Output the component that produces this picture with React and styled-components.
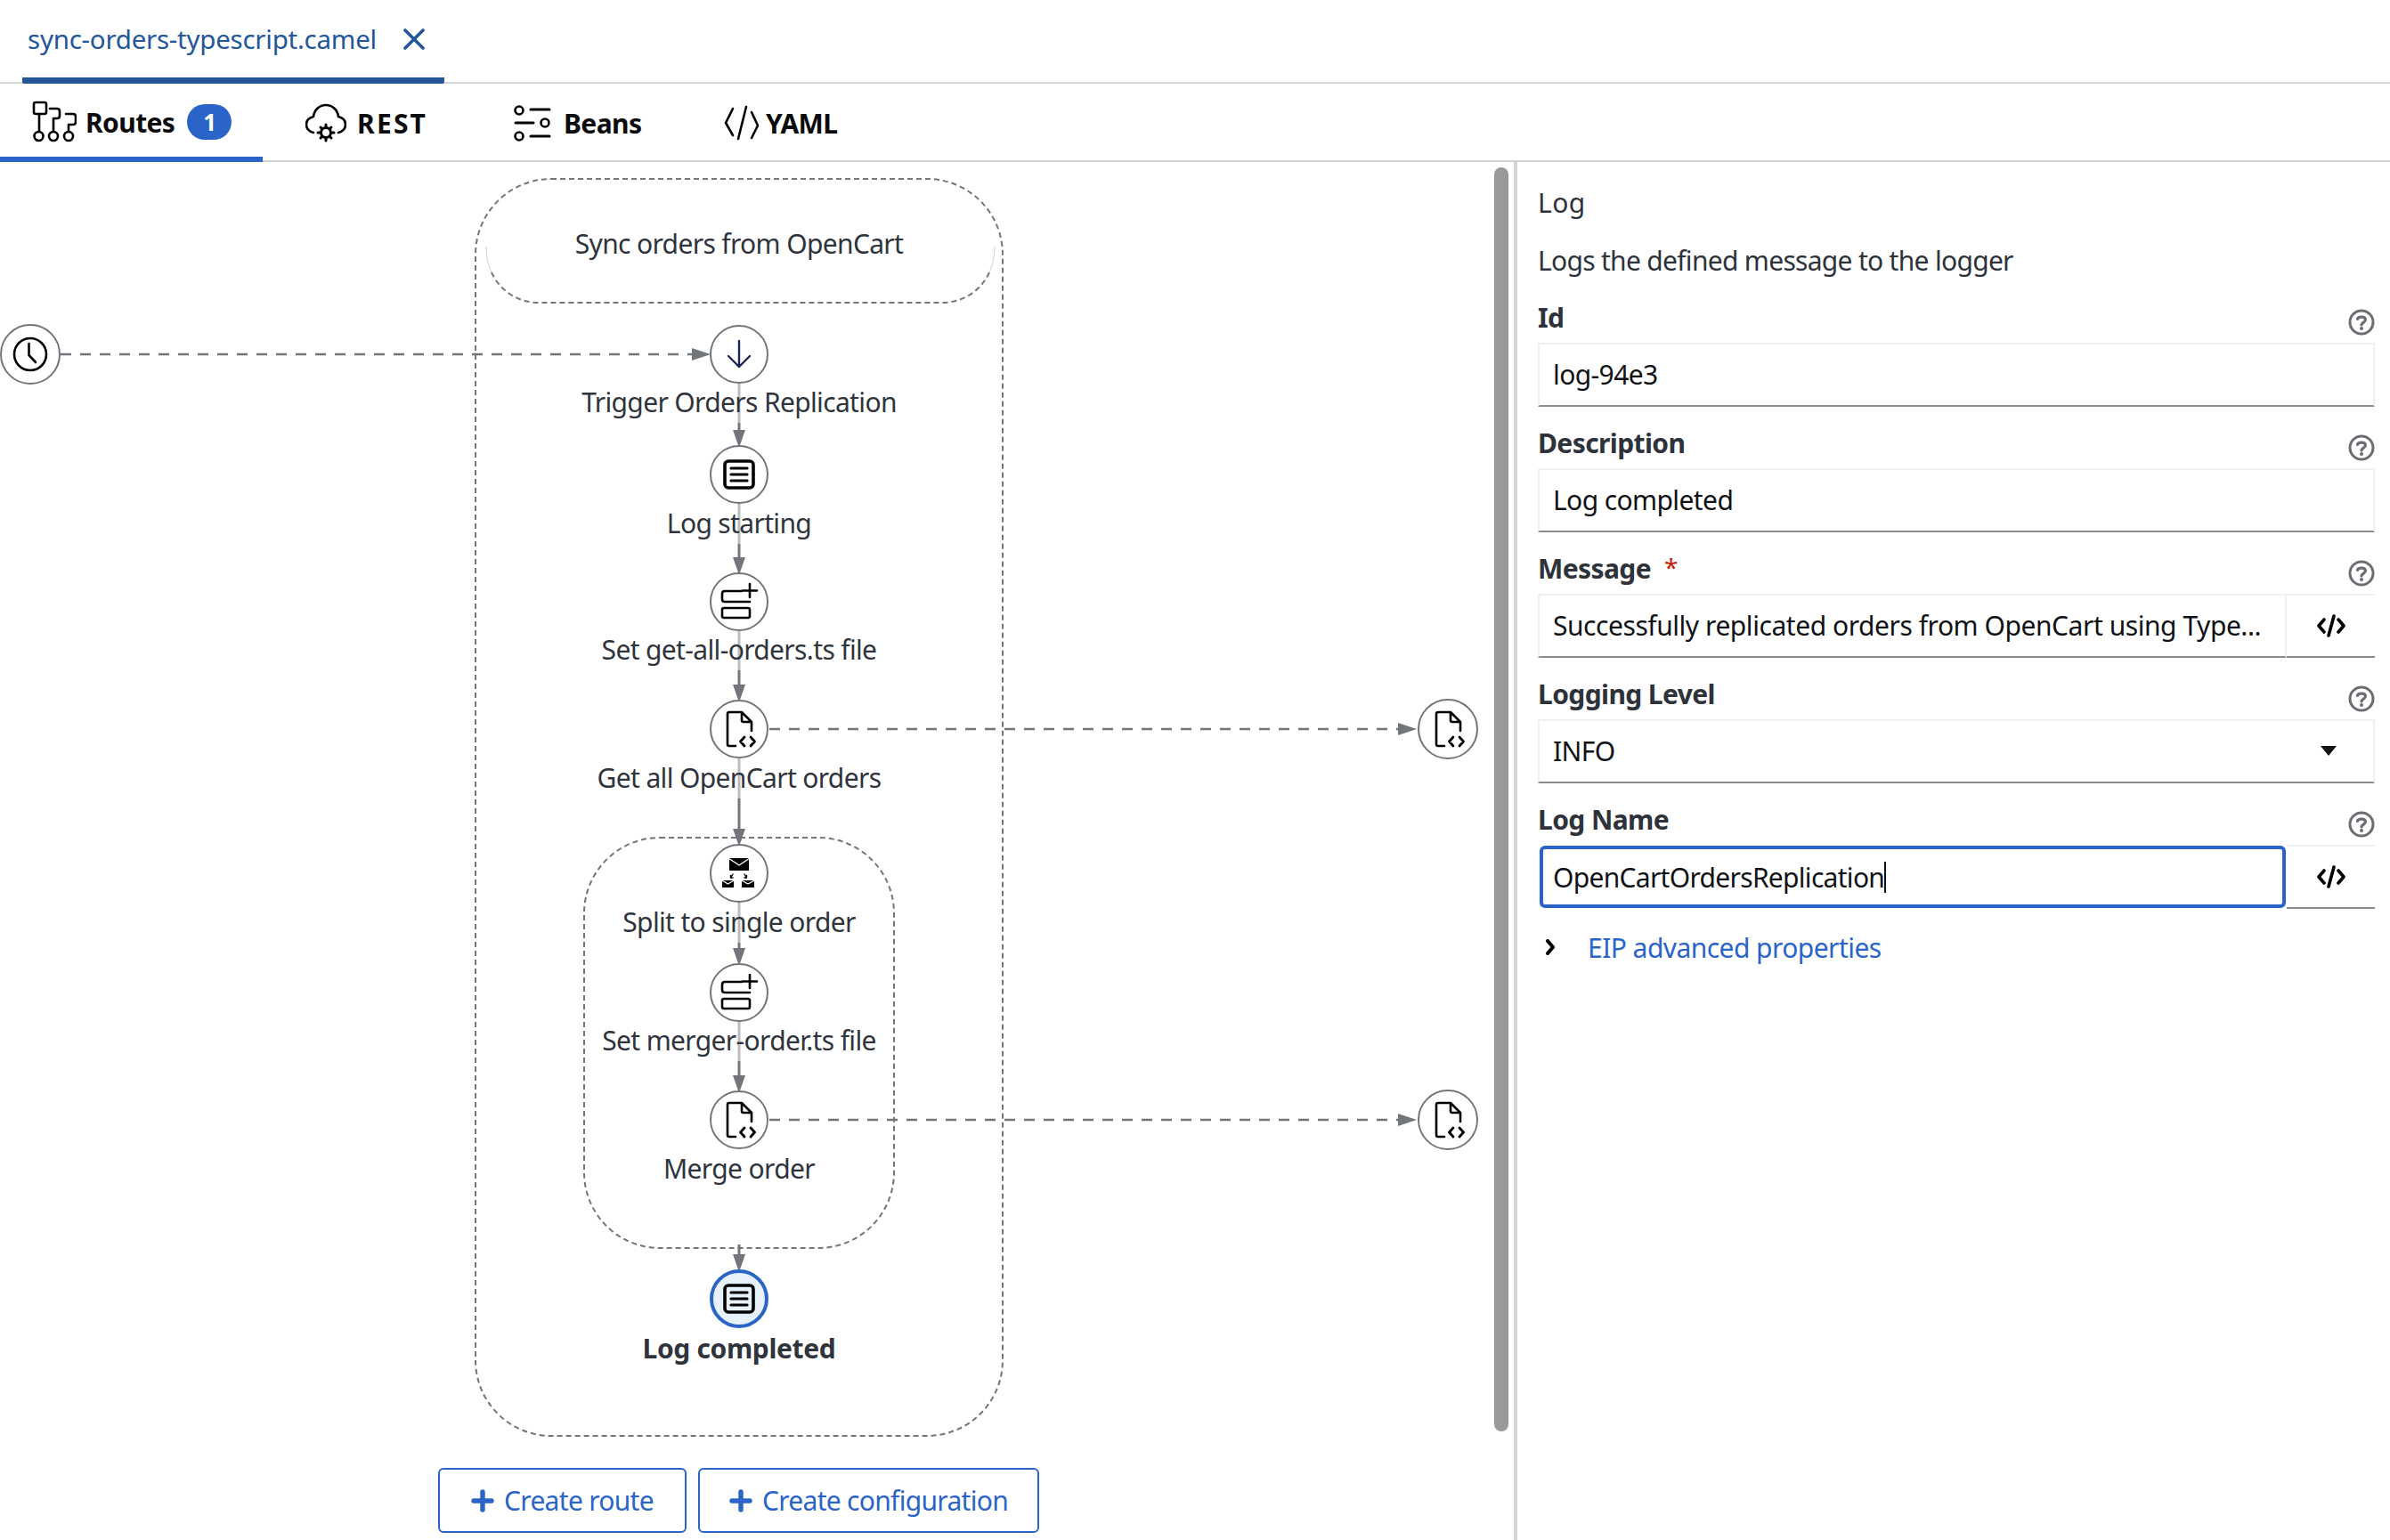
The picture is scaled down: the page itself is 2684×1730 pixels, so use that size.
import React from 'react';
import styled, { createGlobalStyle } from 'styled-components';

const FONT = `'Noto Sans', 'Liberation Sans', sans-serif`;
const BLUE = '#2b64c8';
const TOP = 182;

const Global = createGlobalStyle`
  html, body { margin: 0; padding: 0; background: #fff; }
  body { font-family: ${FONT}; color: #2e323a; }
`;

const Page = styled.div`
  width: 2684px;
  height: 1730px;
  display: flex;
  flex-direction: column;
  overflow: hidden;
`;

const FileBar = styled.div`
  height: 94px;
  box-sizing: border-box;
  border-bottom: 2px solid #d6d6d6;
  display: flex;
  padding-left: 25px;
`;

const FileTab = styled.div`
  width: 474px;
  height: 94px;
  box-sizing: border-box;
  padding: 0 0 0 6px;
  display: flex;
  align-items: center;
  gap: 30px;
  border-bottom: 7px solid #24569c;
  border-radius: 0 0 2px 2px;
  color: #24569c;
  font-size: 29.5px;
  letter-spacing: -0.25px;
`;

const TabBar = styled.div`
  height: 88px;
  box-sizing: border-box;
  border-bottom: 2px solid #d2d2d2;
  display: flex;
`;

const Tab = styled.div`
  height: 88px;
  box-sizing: border-box;
  width: ${p => p.$width}px;
  padding-left: ${p => p.$pad}px;
  padding-top: ${p => (p.$active ? 4 : 0)}px;
  display: flex;
  align-items: center;
  gap: ${p => p.$gap}px;
  font-size: 30px;
  font-weight: 700;
  letter-spacing: ${p => p.$spacing ?? -0.6}px;
  color: #0b0b0b;
  border-bottom: ${p => (p.$active ? `6px solid ${BLUE}` : 'none')};
`;

const Badge = styled.span`
  width: 50px;
  height: 40px;
  margin-left: 4px;
  border-radius: 20px;
  background: ${BLUE};
  color: #fff;
  font-size: 26px;
  font-weight: 700;
  display: flex;
  align-items: center;
  justify-content: center;
`;

const Main = styled.div`
  flex: 1;
  display: flex;
  min-height: 0;
`;

const Canvas = styled.div`
  position: relative;
  width: 1700px;
  flex: none;
`;

const Edges = styled.svg`
  position: absolute;
  left: 0;
  top: 0;
`;

const Node = styled.div`
  position: absolute;
  left: ${p => p.$x - p.$size / 2}px;
  top: ${p => p.$y - TOP - p.$size / 2}px;
  width: ${p => p.$size}px;
  height: ${p => p.$size}px;
  box-sizing: border-box;
  border-radius: 50%;
  border: ${p => (p.$selected ? `4px solid ${BLUE}` : '2px solid #72767b')};
  background: ${p => (p.$selected ? '#e7f1fa' : '#fff')};
  display: flex;
  align-items: center;
  justify-content: center;
`;

const NodeLabel = styled.div`
  position: absolute;
  left: 830px;
  top: ${p => p.$y - TOP - 23}px;
  transform: translateX(-50%);
  height: 46px;
  line-height: 46px;
  white-space: nowrap;
  font-size: 30px;
  letter-spacing: ${p => (p.$selected ? -0.35 : -0.65)}px;
  font-weight: ${p => (p.$selected ? 700 : 400)};
  color: #2f343c;
  background: rgba(255, 255, 255, 0.5);
`;

const Scrollbar = styled.div`
  position: absolute;
  left: 1678px;
  top: 6px;
  width: 16px;
  height: 1420px;
  border-radius: 8px;
  background: #999;
`;

const CanvasActions = styled.div`
  position: absolute;
  left: 492px;
  top: ${1649 - TOP}px;
  display: flex;
  gap: 13px;
`;

const OutlineButton = styled.div`
  width: ${p => p.$width}px;
  height: 73px;
  box-sizing: border-box;
  border: 2px solid ${BLUE};
  border-radius: 6px;
  color: ${BLUE};
  font-size: 30px;
  letter-spacing: -0.7px;
  display: flex;
  align-items: center;
  justify-content: center;
  gap: 11px;
`;

const Panel = styled.div`
  flex: 1;
  border-left: 4px solid #d4d4d4;
  padding: 20px 17px 0 23px;
`;

const PanelTitle = styled.div`
  height: 52px;
  line-height: 52px;
  font-size: 30px;
  letter-spacing: 0.5px;
  color: #2e323a;
`;

const PanelDescription = styled.div`
  margin-top: 20px;
  margin-bottom: 16px;
  height: 38px;
  line-height: 38px;
  font-size: 30px;
  letter-spacing: -0.7px;
  color: #2e323a;
`;

const Field = styled.div`
  height: 141px;
`;

const LabelRow = styled.div`
  height: 57px;
  display: flex;
  justify-content: space-between;
  align-items: center;
`;

const Label = styled.div`
  font-size: 30px;
  font-weight: 700;
  letter-spacing: -0.6px;
  color: #2e323a;
`;

const Required = styled.span`
  color: #c9190b;
  font-weight: 400;
  font-size: 28px;
  margin-left: 15px;
  position: relative;
  top: -2px;
`;

const HelpIcon = styled.svg`
  width: 30px;
  height: 30px;
  margin-top: 10px;
  flex: none;
`;

const InputGroup = styled.div`
  display: flex;
  height: 72px;
`;

const Input = styled.div`
  flex: 1;
  min-width: 0;
  box-sizing: border-box;
  padding: 0 0 2px 15px;
  display: flex;
  align-items: center;
  font-size: 30px;
  letter-spacing: ${p => p.$spacing ?? -0.6}px;
  color: #101216;
  white-space: nowrap;
  overflow: hidden;
  border-top: 2px solid #f0f0f0;
  border-bottom: 2px solid #8a8d90;
  ${p => p.$bordered && 'border-left: 2px solid #f0f0f0; border-right: 2px solid #f0f0f0;'}
`;

const FocusedInput = styled(Input)`
  border: 4px solid ${BLUE};
  border-radius: 6px;
  padding: 0 0 0 11px;
  margin: 1px 1px 1px 2px;
`;

const Caret = styled.span`
  display: inline-block;
  width: 2px;
  height: 35px;
  background: #101216;
`;

const AddOn = styled.div`
  width: 99px;
  flex: none;
  box-sizing: border-box;
  display: flex;
  align-items: center;
  justify-content: center;
  border-top: 2px solid #f0f0f0;
  border-bottom: 2px solid #8a8d90;
`;

const SelectBox = styled(Input)`
  justify-content: space-between;
  padding-right: 41px;
  border-left: 2px solid #f0f0f0;
  border-right: 2px solid #f0f0f0;
`;

const SelectArrow = styled.span`
  width: 0;
  height: 0;
  border-left: 9px solid transparent;
  border-right: 9px solid transparent;
  border-top: 11px solid #101216;
`;

const Expander = styled.div`
  margin-top: 7px;
  height: 48px;
  display: flex;
  align-items: center;
  padding-left: 8px;
  gap: 36px;
  color: ${BLUE};
  font-size: 30px;
  letter-spacing: -0.55px;
`;

const Line = ({ d, w = 2, c = '#000' }) => (
  <path d={d} fill="none" stroke={c} strokeWidth={w} strokeLinecap="round" strokeLinejoin="round" />
);

const RoutesIcon = () => (
  <svg width="50" height="48" viewBox="0 0 50 48">
    <rect x="2" y="2" width="14" height="13" rx="2" fill="none" stroke="#000" strokeWidth="2.6" />
    <Line w={2.6} d="M8 15V35M20 9H28Q31 9 31 12V17Q31 20 28 20H24V35M38 15H46Q49 15 49 18V24Q49 27 46 27H41V35" />
    <circle cx="7.5" cy="40" r="5" fill="none" stroke="#000" strokeWidth="2.6" />
    <circle cx="24" cy="40" r="5" fill="none" stroke="#000" strokeWidth="2.6" />
    <circle cx="41" cy="40" r="5" fill="none" stroke="#000" strokeWidth="2.6" />
  </svg>
);

const RestIcon = () => (
  <svg width="46" height="44" viewBox="0 0 46 44">
    <Line w={2.6} d="M9 33C4 32 1 28 1 24C1 19 5 16 9 15C10 7 16 2 23 2C30 2 36 7 37 15C41 16 45 19 45 24C45 28 42 32 37 33" />
    <circle cx="23" cy="33" r="5.5" fill="none" stroke="#000" strokeWidth="3" />
    <Line w={3} d="M23 24V26M23 40V42M14 33H16M30 33H32M17 27L18.5 28.5M27.5 37.5L29 39M29 27L27.5 28.5M18.5 37.5L17 39" />
  </svg>
);

const BeansIcon = () => (
  <svg width="42" height="42" viewBox="0 0 42 42">
    <circle cx="6" cy="7" r="4.5" fill="none" stroke="#000" strokeWidth="2.6" />
    <circle cx="35" cy="21" r="4.5" fill="none" stroke="#000" strokeWidth="2.6" />
    <circle cx="6" cy="36" r="4.5" fill="none" stroke="#000" strokeWidth="2.6" />
    <Line w={3} d="M19 6H40M2 21H22M19 36H40" />
  </svg>
);

const YamlIcon = () => (
  <svg width="40" height="40" viewBox="0 0 40 40">
    <Line w={2.6} d="M10 4L2 20L10 34M25 2L16 38M31 8L38 23L31 37" />
  </svg>
);

const CloseIcon = () => (
  <svg width="24" height="24" viewBox="0 0 24 24">
    <Line c="#24569c" w={3.6} d="M2 2L22 22M22 2L2 22" />
  </svg>
);

const CodeIcon = () => (
  <svg width="32" height="26" viewBox="0 0 32 26">
    <Line w={3.6} d="M8 6L2 13L8 20M19 2L13 24M24 6L30 13L24 20" />
  </svg>
);

const Help = () => (
  <HelpIcon viewBox="0 0 30 30">
    <circle cx="15" cy="15" r="13" fill="none" stroke="#6a6e73" strokeWidth="3" />
    <Line c="#6a6e73" w={3.2} d="M10.5 11.5C11 8.5 19 8 19.5 12C19.8 15 15 15 15 18" />
    <circle cx="15" cy="22" r="2" fill="#6a6e73" />
  </HelpIcon>
);

const ArrowDownGlyph = () => (
  <svg width="30" height="34" viewBox="0 0 30 34">
    <Line c="#1c2554" w={2.4} d="M15 2V31M3 19L15 31L27 19" />
  </svg>
);

const LogGlyph = () => (
  <svg width="36" height="34" viewBox="0 0 36 34">
    <rect x="2" y="2" width="32" height="30" rx="4" fill="none" stroke="#000" strokeWidth="3.6" />
    <Line w={3.2} d="M9 10H27M9 17H27M9 24H27" />
  </svg>
);

const SetGlyph = () => (
  <svg width="44" height="42" viewBox="0 0 44 42">
    <Line w={2.6} d="M25 9H6Q3 9 3 12V18Q3 21 6 21H34" />
    <rect x="3" y="28" width="31" height="11" rx="2" fill="none" stroke="#000" strokeWidth="2.6" />
    <Line w={2.6} d="M34 1V16M26 8.5H42" />
  </svg>
);

const FileCodeGlyph = () => (
  <svg width="40" height="42" viewBox="0 0 40 42">
    <Line w={2.6} d="M16 40H9Q7 40 7 38V4Q7 2 9 2H23L34 13V23M23 2V11Q23 13 25 13H34" />
    <Line w={2.8} d="M26 30L21.5 35L26 40M33 30L37.5 35L33 40" />
  </svg>
);

const SplitGlyph = () => (
  <svg width="40" height="36" viewBox="0 0 40 36">
    <rect x="9" y="1" width="22" height="14" fill="#000" />
    <Line c="#fff" w={1.4} d="M9.5 2L20 9L30.5 2" />
    <rect x="1" y="26" width="13" height="8" fill="#000" />
    <Line c="#fff" w={1.2} d="M1.5 26.5L7.5 30L13.5 26.5" />
    <rect x="23" y="26" width="14" height="8" fill="#000" />
    <Line c="#fff" w={1.2} d="M23.5 26.5L30 30L36.5 26.5" />
    <Line w={1.4} d="M13 19L10.5 23M10.5 20.5V23H13M26 19L28.5 23M28.5 20.5V23H26" />
  </svg>
);

const ClockGlyph = () => (
  <svg width="40" height="40" viewBox="0 0 40 40">
    <circle cx="20" cy="20" r="18" fill="none" stroke="#000" strokeWidth="2.6" />
    <Line w={2.6} d="M18.5 8V21L26 29" />
  </svg>
);

const PlusGlyph = () => (
  <svg width="26" height="26" viewBox="0 0 26 26">
    <Line c={BLUE} w={5.4} d="M13 3V23M3 13H23" />
  </svg>
);

const Chevron = () => (
  <svg width="12" height="18" viewBox="0 0 12 18">
    <Line w={4} d="M3 2L9 9L3 16" />
  </svg>
);

const DASH = '#72767b';
const arrowDown = (x, tip) => `${x - 7},${tip - 20} ${x + 7},${tip - 20} ${x},${tip}`;
const arrowRight = (tip, y) => `${tip - 21},${y - 7} ${tip - 21},${y + 7} ${tip},${y}`;

const FLOW_EDGES = [
  [431, 500],
  [565, 643],
  [709, 786],
  [852, 948],
  [1013, 1082],
  [1147, 1225],
  [1398, 1426],
];

const NODES = [
  { x: 34, y: 398, size: 68, icon: <ClockGlyph /> },
  { x: 830, y: 398, size: 66, icon: <ArrowDownGlyph /> },
  { x: 830, y: 533, size: 66, icon: <LogGlyph /> },
  { x: 830, y: 676, size: 66, icon: <SetGlyph /> },
  { x: 830, y: 819, size: 66, icon: <FileCodeGlyph /> },
  { x: 1626, y: 819, size: 68, icon: <FileCodeGlyph /> },
  { x: 830, y: 981, size: 66, icon: <SplitGlyph /> },
  { x: 830, y: 1115, size: 66, icon: <SetGlyph /> },
  { x: 830, y: 1258, size: 66, icon: <FileCodeGlyph /> },
  { x: 1626, y: 1258, size: 68, icon: <FileCodeGlyph /> },
  { x: 830, y: 1459, size: 66, icon: <LogGlyph />, selected: true },
];

const LABELS = [
  { y: 274, text: 'Sync orders from OpenCart' },
  { y: 452, text: 'Trigger Orders Replication' },
  { y: 588, text: 'Log starting' },
  { y: 730, text: 'Set get-all-orders.ts file' },
  { y: 874, text: 'Get all OpenCart orders' },
  { y: 1036, text: 'Split to single order' },
  { y: 1169, text: 'Set merger-order.ts file' },
  { y: 1313, text: 'Merge order' },
  { y: 1515, text: 'Log completed', selected: true },
];

const Diagram = () => (
  <Canvas>
    <Edges width="1700" height={1730 - TOP} viewBox={`0 ${TOP} 1700 ${1730 - TOP}`}>
      <rect x="534" y="201" width="592" height="1412" rx="85" fill="none" stroke={DASH} strokeWidth="2" strokeDasharray="6 4" />
      <rect x="656" y="941" width="348" height="461" rx="85" fill="none" stroke={DASH} strokeWidth="2" strokeDasharray="6 4" />
      {/* route header: hairline at the sides, dashed further down */}
      <path d="M546 277C546 287 548 297 552 306M1117 277C1117 287 1115 297 1111 306" fill="none" stroke="#cfcfcf" strokeWidth="1" />
      <path d="M552 306C561 326 581 340 605 340H1058C1082 340 1102 326 1111 306" fill="none" stroke={DASH} strokeWidth="2" strokeDasharray="6 4" />
      {FLOW_EDGES.map(([from, to]) => (
        <g key={from}>
          <line x1="830" y1={from} x2="830" y2={to - 15} stroke={DASH} strokeWidth="3" />
          <polygon points={arrowDown(830, to + 3)} fill={DASH} />
        </g>
      ))}
      <line x1="68" y1="398" x2="780" y2="398" stroke={DASH} strokeWidth="2.4" strokeDasharray="12 10" />
      <polygon points={arrowRight(798, 398)} fill={DASH} />
      <line x1="864" y1="819" x2="1572" y2="819" stroke={DASH} strokeWidth="2.4" strokeDasharray="12 10" />
      <polygon points={arrowRight(1591, 819)} fill={DASH} />
      <line x1="864" y1="1258" x2="1572" y2="1258" stroke={DASH} strokeWidth="2.4" strokeDasharray="12 10" />
      <polygon points={arrowRight(1591, 1258)} fill={DASH} />
    </Edges>
    {LABELS.map(l => (
      <NodeLabel key={l.text} $y={l.y} $selected={l.selected}>{l.text}</NodeLabel>
    ))}
    {NODES.map(n => (
      <Node key={`${n.x}-${n.y}`} $x={n.x} $y={n.y} $size={n.size} $selected={n.selected}>{n.icon}</Node>
    ))}
    <Scrollbar />
    <CanvasActions>
      <OutlineButton $width={279}><PlusGlyph />Create route</OutlineButton>
      <OutlineButton $width={383}><PlusGlyph />Create configuration</OutlineButton>
    </CanvasActions>
  </Canvas>
);

export default function App() {
  return (
    <Page>
      <Global />
      <FileBar>
        <FileTab>sync-orders-typescript.camel<CloseIcon /></FileTab>
      </FileBar>
      <TabBar>
        <Tab $active $width={295} $pad={36} $gap={10}><RoutesIcon />Routes<Badge>1</Badge></Tab>
        <Tab $width={234} $pad={48} $gap={12} $spacing={2.2}><RestIcon />REST</Tab>
        <Tab $width={236} $pad={48} $gap={14}><BeansIcon />Beans</Tab>
        <Tab $width={200} $pad={48} $gap={7}><YamlIcon />YAML</Tab>
      </TabBar>
      <Main>
        <Diagram />
        <Panel>
          <PanelTitle>Log</PanelTitle>
          <PanelDescription>Logs the defined message to the logger</PanelDescription>
          <Field>
            <LabelRow><Label>Id</Label><Help /></LabelRow>
            <InputGroup><Input $bordered>log-94e3</Input></InputGroup>
          </Field>
          <Field>
            <LabelRow><Label>Description</Label><Help /></LabelRow>
            <InputGroup><Input $bordered>Log completed</Input></InputGroup>
          </Field>
          <Field>
            <LabelRow><Label>Message<Required>*</Required></Label><Help /></LabelRow>
            <InputGroup>
              <Input $bordered $spacing={-0.45}>Successfully replicated orders from OpenCart using Type...</Input>
              <AddOn><CodeIcon /></AddOn>
            </InputGroup>
          </Field>
          <Field>
            <LabelRow><Label>Logging Level</Label><Help /></LabelRow>
            <InputGroup><SelectBox>INFO<SelectArrow /></SelectBox></InputGroup>
          </Field>
          <Field>
            <LabelRow><Label>Log Name</Label><Help /></LabelRow>
            <InputGroup>
              <FocusedInput $spacing={-0.7}>OpenCartOrdersReplication<Caret /></FocusedInput>
              <AddOn><CodeIcon /></AddOn>
            </InputGroup>
          </Field>
          <Expander><Chevron />EIP advanced properties</Expander>
        </Panel>
      </Main>
    </Page>
  );
}
